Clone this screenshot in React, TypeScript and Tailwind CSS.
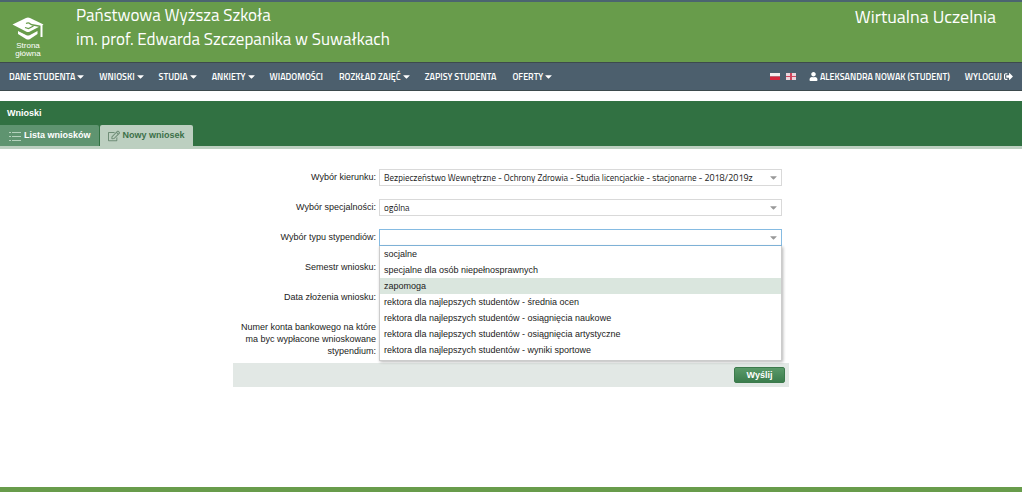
import { FaCaretDown, FaUser, FaSignOutAlt, FaRegEdit } from "react-icons/fa";

type MenuItem = { label: string; dropdown?: boolean };

const menu: MenuItem[] = [
	{ label: "DANE STUDENTA", dropdown: true },
	{ label: "WNIOSKI", dropdown: true },
	{ label: "STUDIA", dropdown: true },
	{ label: "ANKIETY", dropdown: true },
	{ label: "WIADOMOŚCI" },
	{ label: "ROZKŁAD ZAJĘĆ", dropdown: true },
	{ label: "ZAPISY STUDENTA" },
	{ label: "OFERTY", dropdown: true },
];

const scholarships = [
	"socjalne",
	"specjalne dla osób niepełnosprawnych",
	"zapomoga",
	"rektora dla najlepszych studentów - średnia ocen",
	"rektora dla najlepszych studentów - osiągnięcia naukowe",
	"rektora dla najlepszych studentów - osiągnięcia artystyczne",
	"rektora dla najlepszych studentów - wyniki sportowe",
];

const CapIcon = () => (
	<svg viewBox="0 0 32 26" className="h-[26px] w-8" aria-hidden="true">
		<path fill="#fff" d="M.5 10.500 14 4q2-.8 4 0L31.500 10.500 18 17.500q-2 1-4 0z" />
		<path fill="none" stroke="#689c4b" strokeWidth="1.300" d="M14 9.500q2.500-1.200 4 .2t3.500 1.300L29 12.500M13 13.500l3.500 1 5-2.500" />
		<path fill="#fff" d="M6 17l8 4q2 1 4 0l7.500-4v3L18 25q-2 1.200-4 0l-8-5z" />
		<path fill="none" stroke="#689c4b" d="M5 15.500l9 4.500q2 1 4 0l8-4.500" />
		<path fill="none" stroke="#fff" strokeWidth="2" d="M29.500 10.500v12.500" />
	</svg>
);

const ListIcon = () => (
	<svg viewBox="0 0 12 10" className="h-[10px] w-3" stroke="currentColor" fill="none" aria-hidden="true">
		<path d="M0 1.500h2M0 5.500h2M0 9.500h2M3 1.500h9M3 5.500h9M3 9.500h9" />
	</svg>
);

const Header = () => (
	<header className="flex h-[62px] items-start border-t-2 border-[#4b6470] bg-[#689c4b] font-['Titillium_Web','Open_Sans',sans-serif] text-white">
		<a
			href="#"
			className="ml-3 mt-3 flex w-8 flex-col items-center text-center font-['Liberation_Sans',sans-serif] text-[8px] leading-[8px]"
		>
			<CapIcon />
			<span className="mt-[2px]">Strona główna</span>
		</a>
		<h1 className="ml-8 mt-px flex-1 text-[17px] leading-6">
			Państwowa Wyższa Szkoła
			<br />
			im. prof. Edwarda Szczepanika w Suwałkach
		</h1>
		<p className="mr-[26px] mt-[3px] text-[18px] leading-6">Wirtualna Uczelnia</p>
	</header>
);

const NavBar = () => (
	<nav className="flex h-[29px] items-center border-y border-[#3d4a4d] bg-[#4c5f6d] px-[9px] font-['Titillium_Web','Open_Sans',sans-serif] text-[9px] font-semibold text-white">
		<ul className="flex flex-1 gap-4">
			{menu.map(({ label, dropdown }) => (
				<li key={label}>
					<a href="#" className="flex items-center whitespace-nowrap">
						{label}
						{dropdown && <FaCaretDown className="-mr-[3px] size-[11px]" />}
					</a>
				</li>
			))}
		</ul>
		<a href="#" aria-label="Polski">
			<svg viewBox="0 0 10 7" className="h-[7px] w-[10px]">
				<path fill="#f4eeee" d="M0 0h10v3.500H0z" />
				<path fill="#d8263c" d="M0 3.500h10V7H0z" />
			</svg>
		</a>
		<a href="#" aria-label="English" className="ml-[6px]">
			<svg viewBox="0 0 10 7" className="h-[7px] w-[10px]">
				<path fill="#ecd5dc" d="M0 0h10v7H0z" />
				<path fill="#d0455c" d="M4 0h2v7H4zM0 3h10v1H0z" />
			</svg>
		</a>
		<a href="#" className="ml-[13px] flex items-center gap-[2px] whitespace-nowrap">
			<FaUser className="size-[9px]" />
			ALEKSANDRA NOWAK (STUDENT)
		</a>
		<a href="#" className="ml-[15px] flex items-center gap-[2px] whitespace-nowrap">
			WYLOGUJ
			<FaSignOutAlt className="size-[9px]" />
		</a>
	</nav>
);

const Tabs = () => (
	<section className="mt-[10px] border-b-[3px] border-[#bccfc0] bg-[#317142] text-[9px] font-bold text-white">
		<h2 className="px-[7px] pt-[6px] leading-3">Wnioski</h2>
		<div className="mt-[6px] flex gap-px">
			<button
				type="button"
				className="flex h-[21px] items-center gap-[3px] rounded-tr-xs bg-[#5f9470] pl-[9px] pr-2"
			>
				<span className="text-[#b5d2bd]">
					<ListIcon />
				</span>
				Lista wniosków
			</button>
			<button
				type="button"
				className="flex h-[21px] items-center gap-[3px] rounded-t-xs bg-[#bccfc0] px-2 text-[#3d7049]"
			>
				<FaRegEdit className="size-3 text-[#6f8d77]" />
				Nowy wniosek
			</button>
		</div>
	</section>
);

const labelClass = "w-[143px] shrink-0 text-right leading-[17px]";
const fieldClass =
	"block h-[17px] w-full appearance-none border bg-white px-1 font-['Titillium_Web','Open_Sans',sans-serif] text-[9px] leading-[15px] outline-none";

const SelectField = ({
	id,
	label,
	value,
	active,
}: {
	id: string;
	label: string;
	value: string;
	active?: boolean;
}) => (
	<div className="flex gap-[3px]">
		<label htmlFor={id} className={labelClass}>
			{label}
		</label>
		<div className="relative flex-1">
			<select
				id={id}
				className={`${fieldClass} ${active ? "border-[#85bbe2]" : "border-[#d9d9d9]"}`}
			>
				<option>{value}</option>
			</select>
			<FaCaretDown className="pointer-events-none absolute right-[3px] top-[3px] size-[11px] text-[#999]" />
			{active && (
				<ul
					role="listbox"
					className="absolute inset-x-0 top-full z-10 border border-t-0 border-[#ccc] bg-white pb-[2px] leading-4 shadow-[1px_1px_3px_rgba(0,0,0,0.3)]"
				>
					{scholarships.map((name) => (
						<li
							key={name}
							role="option"
							aria-selected={name === "zapomoga"}
							className="px-1 aria-selected:bg-[#dae6de]"
						>
							{name}
						</li>
					))}
				</ul>
			)}
		</div>
	</div>
);

const InputField = ({ id, label }: { id: string; label: string }) => (
	<div className="flex items-center gap-[3px]">
		<label htmlFor={id} className={labelClass}>
			{label}
		</label>
		<input id={id} type="text" className={`${fieldClass} flex-1 border-[#d9d9d9]`} />
	</div>
);

const RequestForm = () => (
	<form className="mx-auto mt-5 w-[556px]">
		<div className="flex flex-col gap-[13px] pr-[7px]">
			<SelectField
				id="kierunek"
				label="Wybór kierunku:"
				value="Bezpieczeństwo Wewnętrzne - Ochrony Zdrowia - Studia licencjackie - stacjonarne - 2018/2019z"
			/>
			<SelectField id="specjalnosc" label="Wybór specjalności:" value="ogólna" />
			<SelectField id="stypendium" label="Wybór typu stypendiów:" value="" active />
			<InputField id="semestr" label="Semestr wniosku:" />
			<InputField id="data" label="Data złożenia wniosku:" />
			<div className="flex items-center gap-[3px] py-[2px]">
				<label htmlFor="konto" className="w-[143px] shrink-0 text-right leading-3">
					Numer konta bankowego na które ma byc wypłacone wnioskowane stypendium:
				</label>
				<input id="konto" type="text" className={`${fieldClass} flex-1 border-[#d9d9d9]`} />
			</div>
		</div>
		<div className="mt-1 flex h-6 items-center justify-end bg-[#e2e8e5] pr-1">
			<button
				type="submit"
				className="h-4 w-[51px] rounded-xs border border-[#3c7a4c] bg-linear-to-b from-[#5a9a69] to-[#3b7d4d] font-bold leading-3 text-white"
			>
				Wyślij
			</button>
		</div>
	</form>
);

export default function App() {
	return (
		<div className="flex min-h-screen flex-col bg-white pr-px font-['Liberation_Sans',sans-serif] text-[9px] text-[#222]">
			<Header />
			<NavBar />
			<Tabs />
			<main className="flex-1">
				<RequestForm />
			</main>
			<footer className="h-[5px] bg-[#689c4b]" />
		</div>
	);
}
